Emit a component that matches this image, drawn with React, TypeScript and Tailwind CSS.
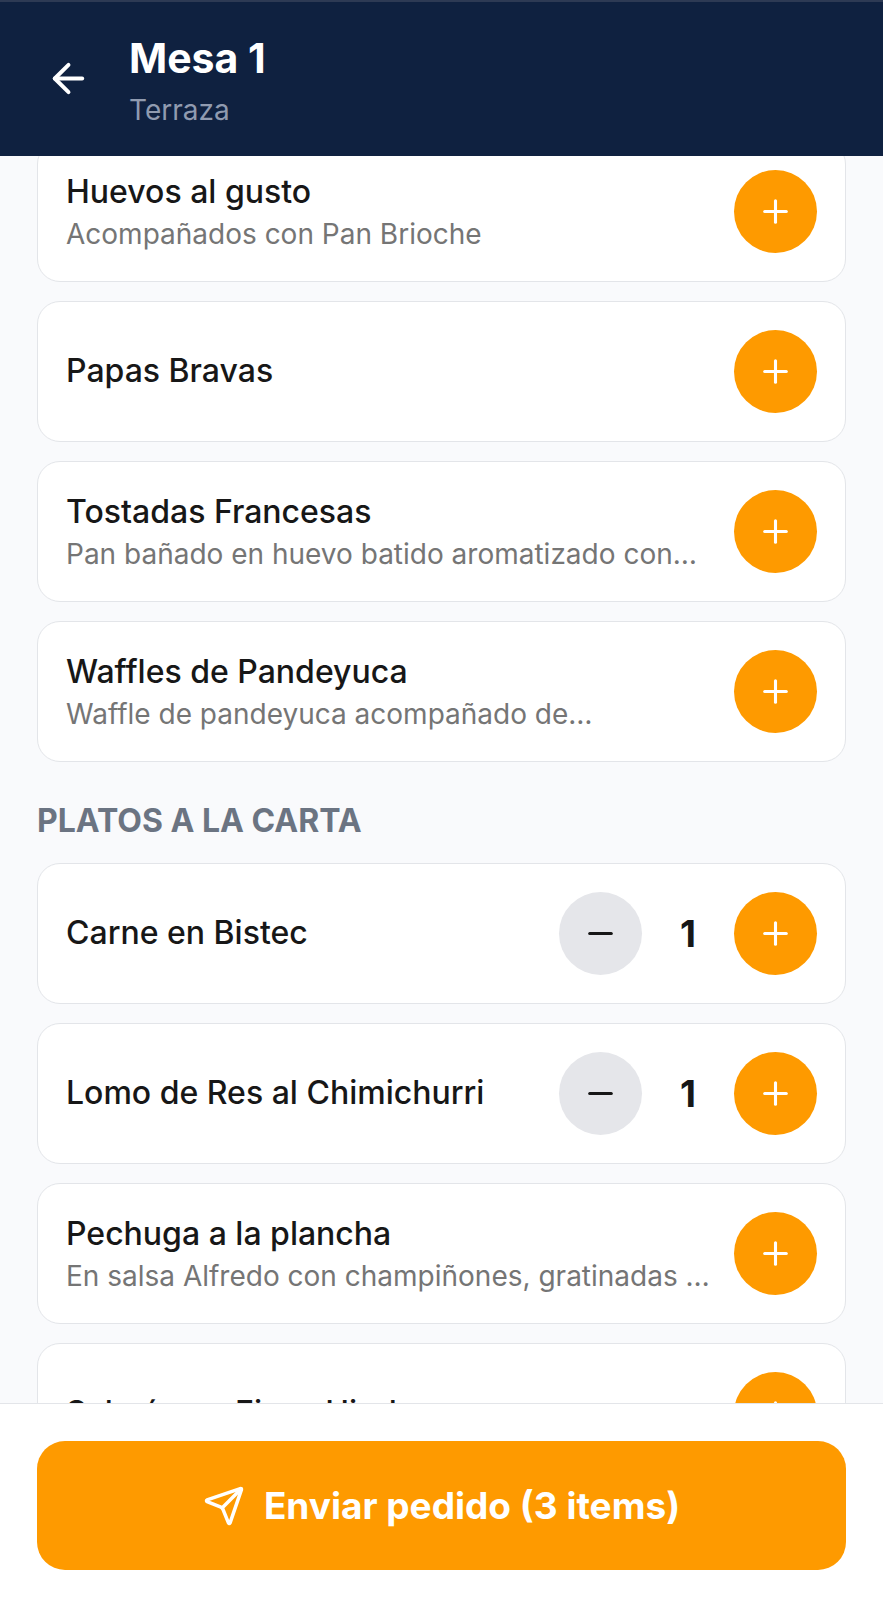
import { useState } from "react";
import { ArrowLeft, Minus, Plus, Send } from "lucide-react";

interface MenuItem {
  id: number;
  name: string;
  description?: string;
}

interface Category {
  name: string;
  items: MenuItem[];
}

const categories: Category[] = [
  {
    name: "",
    items: [
      { id: 1, name: "Huevos al gusto", description: "Acompañados con Pan Brioche" },
      { id: 2, name: "Papas Bravas" },
      { id: 3, name: "Tostadas Francesas", description: "Pan bañado en huevo batido aromatizado con…" },
      { id: 4, name: "Waffles de Pandeyuca", description: "Waffle de pandeyuca acompañado de…" },
    ],
  },
  {
    name: "Platos a la carta",
    items: [
      { id: 5, name: "Carne en Bistec" },
      { id: 6, name: "Lomo de Res al Chimichurri" },
      { id: 7, name: "Pechuga a la plancha", description: "En salsa Alfredo con champiñones, gratinadas …" },
      { id: 8, name: "Salmón en Finas Hierbas" },
    ],
  },
];

export default function App() {
  const [cart, setCart] = useState<Record<number, number>>({ 5: 1, 6: 1, 9: 1 });

  const changeQuantity = (id: number, delta: number) => {
    setCart((prev) => ({ ...prev, [id]: Math.max(0, (prev[id] || 0) + delta) }));
  };

  const totalItems = Object.values(cart).reduce((sum, n) => sum + n, 0);

  return (
    <div className="h-screen flex flex-col bg-[#f9fafc] font-['Inter',sans-serif] text-[#171717]">
      {/* Header */}
      <header className="shrink-0 flex items-center gap-[37px] px-[45px] pt-[27px] pb-[28px] bg-[#0f2140] border-t-2 border-[#2d3a54]">
        <button aria-label="Volver" className="text-white">
          <ArrowLeft size={47} />
        </button>
        <div>
          <h1 className="text-[41px] leading-[58px] font-bold text-white">Mesa 1</h1>
          <p className="mt-[5px] text-[28px] leading-[36px] text-[#909bb0]">Terraza</p>
        </div>
      </header>

      {/* Menu */}
      <main className="flex-1 min-h-0 overflow-hidden px-[37px]">
        <div className="-mt-[15px]">
          {categories.map((category) => (
            <section key={category.name} className="mb-[37px]">
              {category.name && (
                <h2 className="mb-[20px] text-[32px] leading-[44px] font-bold uppercase text-[#6b7482]">
                  {category.name}
                </h2>
              )}
              <ul className="flex flex-col gap-[19px]">
                {category.items.map((item) => {
                  const quantity = cart[item.id] || 0;
                  return (
                    <li
                      key={item.id}
                      className="flex items-center gap-[18px] p-[28px] bg-white border border-[#e3e5e9] rounded-[23px]"
                    >
                      <div className="flex-1 min-w-0">
                        <p className="mb-[2px] text-[32px] leading-[44px] font-medium truncate">{item.name}</p>
                        {item.description && (
                          <p className="text-[28px] leading-[37px] text-[#757575] truncate">{item.description}</p>
                        )}
                      </div>
                      {quantity > 0 && (
                        <>
                          <button
                            aria-label={`Quitar ${item.name}`}
                            onClick={() => changeQuantity(item.id, -1)}
                            className="size-[83px] shrink-0 rounded-full bg-[#e5e6ea] flex items-center justify-center"
                          >
                            <Minus size={37} />
                          </button>
                          <span className="w-[56px] text-center text-[37px] leading-[46px] font-bold">{quantity}</span>
                        </>
                      )}
                      <button
                        aria-label={`Agregar ${item.name}`}
                        onClick={() => changeQuantity(item.id, 1)}
                        className="size-[83px] shrink-0 rounded-full bg-[#fe9a00] text-white flex items-center justify-center"
                      >
                        <Plus size={37} />
                      </button>
                    </li>
                  );
                })}
              </ul>
            </section>
          ))}
        </div>
      </main>

      {/* Send order */}
      <footer className="shrink-0 px-[37px] pt-[37px] pb-[30px] bg-white border-t border-[#e3e5e9]">
        <button className="w-full h-[129px] flex items-center justify-center gap-[19px] rounded-[28px] bg-[#fe9a00] text-white text-[37px] leading-[46px] font-bold">
          <Send size={42} />
          <span>Enviar pedido ({totalItems} items)</span>
        </button>
      </footer>
    </div>
  );
}
